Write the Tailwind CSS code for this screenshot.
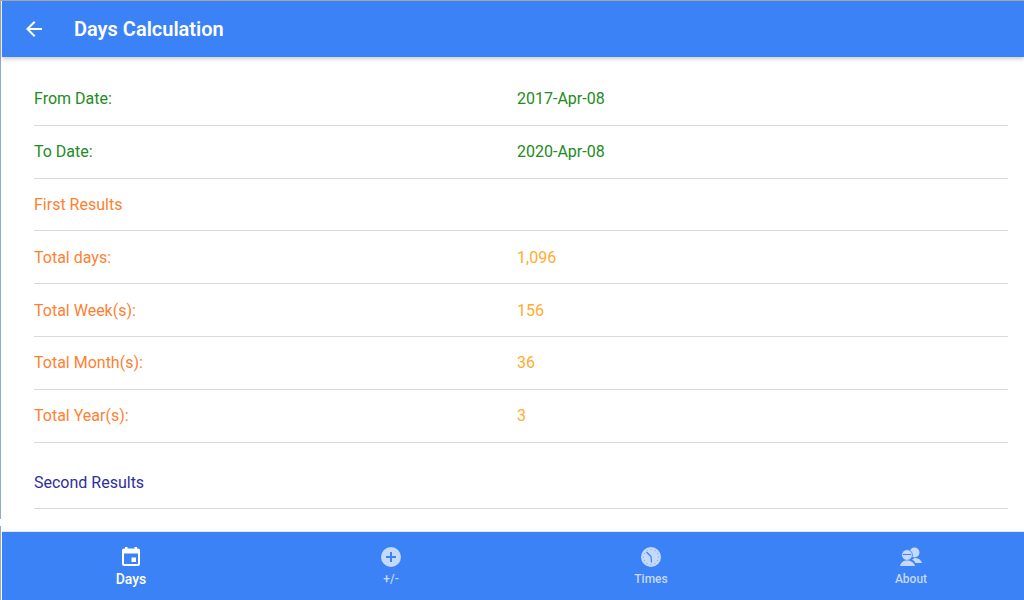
<!DOCTYPE html>
<html lang="en">
    <head>
        <meta charset="UTF-8" />
        <meta name="viewport" content="width=device-width, initial-scale=1.0" />
        <title>Days Calculation</title>
        <script src="https://cdn.jsdelivr.net/npm/@tailwindcss/browser@4"></script>
    </head>
    <body class="bg-white font-['Roboto',sans-serif] h-[600px] w-[1024px] overflow-hidden">
        <div class="relative h-[600px] flex flex-col border-t border-[#a9a9a9] pl-[2px]">
            <!-- left edge of the window behind -->
            <div class="absolute left-0 top-0 w-[1px] h-[518px] bg-[#8fa9d0]"></div>
            <div class="absolute left-0 top-[525px] w-[1px] h-[75px] bg-[#8fa9d0]"></div>

            <!-- header -->
            <header class="relative z-10 h-[56px] shrink-0 bg-[#3b82f6] shadow-[0_2px_4px_rgba(0,0,0,0.2)] flex items-center text-white">
                <svg class="ml-[20px] w-[24px] h-[24px]" viewBox="0 0 24 24" fill="currentColor">
                    <path d="M20 11H7.830l5.590-5.590L12 4l-8 8 8 8 1.410-1.410L7.830 13H20v-2z" />
                </svg>
                <h1 class="ml-[28px] text-[20px] font-semibold">Days Calculation</h1>
            </header>

            <!-- rows -->
            <main class="flex-1 pl-[32px] pr-[16px] pt-[16px] text-[16px] leading-[20px]">
                <div class="h-[53px] pt-[16px] border-b border-[#d9d9d9] grid grid-cols-[483px_1fr] text-[#228b22]">
                    <span>From Date:</span><span>2017-Apr-08</span>
                </div>
                <div class="h-[53px] pt-[16px] border-b border-[#d9d9d9] grid grid-cols-[483px_1fr] text-[#228b22]">
                    <span>To Date:</span><span>2020-Apr-08</span>
                </div>
                <div class="h-[52px] pt-[16px] border-b border-[#d9d9d9] text-[#ff7f32]">First Results</div>
                <div class="h-[53px] pt-[17px] border-b border-[#d9d9d9] grid grid-cols-[483px_1fr] text-[#ff7f32]">
                    <span>Total days:</span><span class="text-[#ffab2e]">1,096</span>
                </div>
                <div class="h-[53px] pt-[17px] border-b border-[#d9d9d9] grid grid-cols-[483px_1fr] text-[#ff7f32]">
                    <span>Total Week(s):</span><span class="text-[#ffab2e]">156</span>
                </div>
                <div class="h-[53px] pt-[16px] border-b border-[#d9d9d9] grid grid-cols-[483px_1fr] text-[#ff7f32]">
                    <span>Total Month(s):</span><span class="text-[#ffab2e]">36</span>
                </div>
                <div class="h-[53px] pt-[16px] border-b border-[#d9d9d9] grid grid-cols-[483px_1fr] text-[#ff7f32]">
                    <span>Total Year(s):</span><span class="text-[#ffab2e]">3</span>
                </div>
                <div class="h-[66px] pt-[30px] border-b border-[#d9d9d9] text-[#2e2e9e]">Second Results</div>
            </main>

            <!-- bottom tabs -->
            <nav class="h-[69px] shrink-0 bg-[#3b82f6] border-t border-[#e8e8e8] overflow-hidden">
                <div class="-ml-[1px] grid grid-cols-[repeat(4,260px)] text-[12px] font-medium text-center">
                    <div class="flex flex-col items-center pt-[13px] text-white">
                        <svg class="w-[24px] h-[24px]" viewBox="0 0 24 24" fill="currentColor">
                            <path fill-rule="evenodd" d="M6 2h2.500v1.500h7V2H18v1.500h1a2 2 0 0 1 2 2V19a2 2 0 0 1-2 2H5a2 2 0 0 1-2-2V5.500a2 2 0 0 1 2-2h1V2zM5 8.500V19h14V8.500H5zM12.500 12.500H17V17h-4.500v-4.500z" />
                        </svg>
                        <span class="mt-[3px] leading-[14px] text-[14px]">Days</span>
                    </div>
                    <div class="flex flex-col items-center pt-[13px] text-[#c4d9fc]">
                        <svg class="w-[24px] h-[24px]" viewBox="0 0 24 24" fill="currentColor">
                            <path fill-rule="evenodd" d="M12 2a10 10 0 1 0 0 20 10 10 0 0 0 0-20zm1 5h-2v4H7v2h4v4h2v-4h4v-2h-4V7z" />
                        </svg>
                        <span class="mt-[3px] leading-[14px]">+/-</span>
                    </div>
                    <div class="flex flex-col items-center pt-[13px] text-[#c4d9fc]">
                        <svg class="w-[24px] h-[24px]" viewBox="0 0 24 24">
                            <circle cx="12" cy="12" r="10" fill="currentColor" />
                            <path d="M7.500 7 12 11.500 12.500 17.500" fill="none" stroke="#3b82f6" stroke-width="1.200" />
                            <g fill="#3b82f6" opacity="0.6">
                                <circle cx="12" cy="4.500" r="0.600" />
                                <circle cx="16" cy="5.500" r="0.600" />
                                <circle cx="18.500" cy="8.500" r="0.600" />
                                <circle cx="19.500" cy="12" r="0.600" />
                                <circle cx="18.500" cy="15.500" r="0.600" />
                                <circle cx="16" cy="18.500" r="0.600" />
                                <circle cx="12" cy="19.500" r="0.600" />
                                <circle cx="8" cy="18.500" r="0.600" />
                                <circle cx="5.500" cy="15.500" r="0.600" />
                                <circle cx="4.500" cy="12" r="0.600" />
                                <circle cx="5.500" cy="8.500" r="0.600" />
                                <circle cx="8" cy="5.500" r="0.600" />
                            </g>
                        </svg>
                        <span class="mt-[3px] leading-[14px]">Times</span>
                    </div>
                    <div class="flex flex-col items-center pt-[13px] text-[#c4d9fc]">
                        <svg class="w-[24px] h-[24px]" viewBox="0 0 24 24" fill="currentColor">
                            <circle cx="15.500" cy="7.500" r="5" />
                            <path d="M15.500 13c3 0 6.500 1.300 7.500 5h-6.500c-.6-1.500-1.800-2.600-3.500-3.300z" />
                            <circle cx="8" cy="10" r="5.400" stroke="#3b82f6" stroke-width="0.800" />
                            <path d="M4 9.500h8" stroke="#3b82f6" stroke-width="1" />
                            <path d="M1 21c.6-3.500 3.600-5.500 7-5.500S15.400 17.500 16 21z" />
                        </svg>
                        <span class="mt-[3px] leading-[14px]">About</span>
                    </div>
                </div>
            </nav>
        </div>
    </body>
</html>
